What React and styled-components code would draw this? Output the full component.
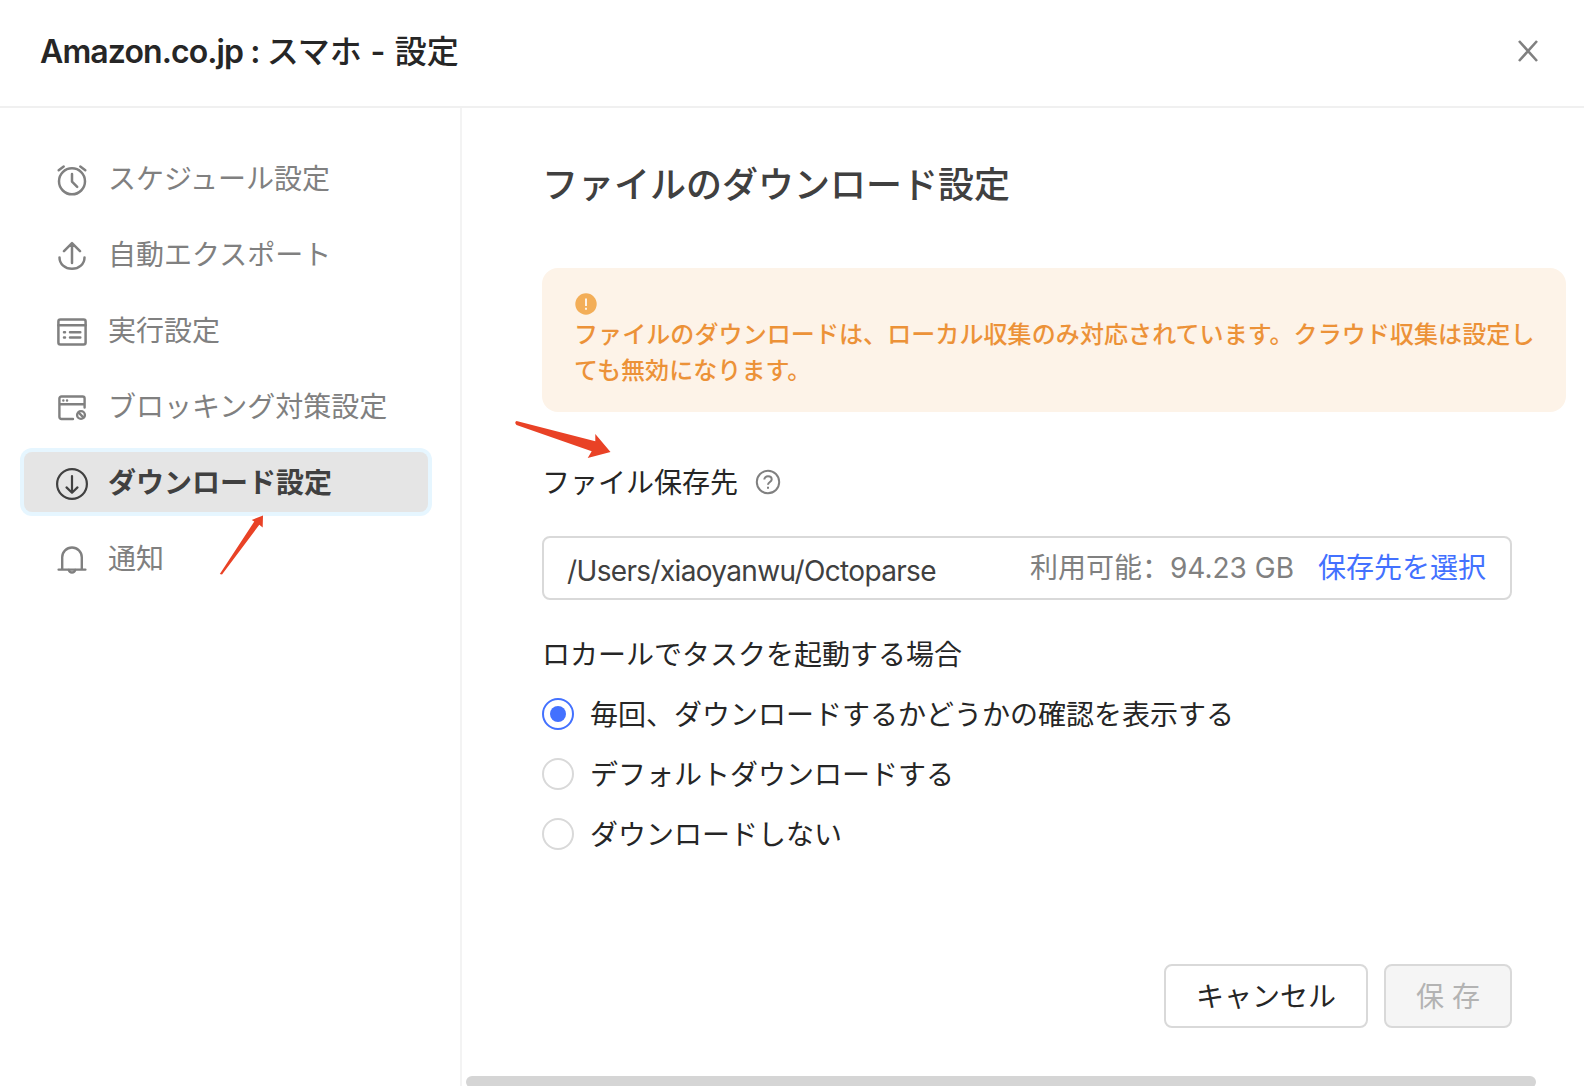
import React, { useState } from 'react';
import styled, { createGlobalStyle } from 'styled-components';

const GlobalStyle = createGlobalStyle`
  * {
    box-sizing: border-box;
  }
  body {
    margin: 0;
    background: #fff;
    font-family: 'Inter', 'Noto Sans CJK JP', sans-serif;
    color: #262626;
  }
  button {
    font-family: inherit;
  }
`;

const Dialog = styled.div`
  position: relative;
  display: flex;
  flex-direction: column;
  width: 1584px;
  height: 1086px;
  overflow: hidden;
  background: #fff;
`;

const Header = styled.header`
  display: flex;
  align-items: center;
  justify-content: space-between;
  flex: none;
  height: 108px;
  padding: 0 44px 4px 40px;
  border-bottom: 2px solid #f0f0f0;
`;

const Title = styled.h1`
  margin: 2px 0 0;
  font-size: 32px;
  line-height: 48px;
  font-weight: 500;
  white-space: pre;
`;

const Latin = styled.span`
  font-weight: ${props => props.$weight || 400};
  letter-spacing: ${props => props.$spacing || '0'};
`;

const CloseButton = styled.button`
  display: flex;
  padding: 0;
  border: 0;
  background: none;
  cursor: pointer;
`;

const Body = styled.div`
  display: flex;
  flex: 1;
  min-height: 0;
`;

const Sidebar = styled.nav`
  display: flex;
  flex-direction: column;
  gap: 16px;
  flex: none;
  width: 462px;
  padding: 40px 32px 0 24px;
  border-right: 2px solid #f3f3f3;
`;

const MenuItem = styled.button`
  display: flex;
  align-items: center;
  gap: 20px;
  width: 404px;
  height: 60px;
  padding: 0 32px;
  border: 0;
  border-radius: 8px;
  font-size: 28px;
  line-height: 40px;
  text-align: left;
  white-space: nowrap;
  cursor: pointer;
  font-weight: ${props => (props.$active ? 700 : 400)};
  color: ${props => (props.$active ? '#404040' : '#808080')};
  background: ${props => (props.$active ? '#e5e5e5' : 'transparent')};
  box-shadow: ${props => (props.$active ? '0 0 0 4px #e6f6ff' : 'none')};

  svg {
    flex: none;
    margin-top: 4px;
  }
`;

const MenuText = styled.span`
  margin-top: 1px;
`;

const Main = styled.main`
  display: flex;
  flex-direction: column;
  flex: 1;
  min-width: 0;
  overflow: hidden;
`;

const Content = styled.div`
  flex: 1;
  width: 1050px;
  padding: 50px 0 0 80px;
`;

const Heading = styled.h2`
  margin: 0 0 56px;
  font-size: 36px;
  line-height: 54px;
  font-weight: 500;
  color: #404040;
`;

const Notice = styled.div`
  width: 1024px;
  height: 144px;
  padding: 24px 24px 24px 32px;
  border-radius: 16px;
  background: #fdf3e8;
  color: #ec9238;
  font-size: 24px;
  line-height: 36px;
  letter-spacing: 0.09px;
  font-weight: 500;

  svg {
    display: block;
  }
  p {
    margin: 0;
    padding-top: 1px;
  }
`;

const FieldLabel = styled.div`
  display: flex;
  align-items: center;
  gap: 17px;
  margin-top: 48px;
  height: 44px;
  font-size: 28px;
  line-height: 44px;
`;

const LabelText = styled.span`
  padding-top: 1px;
`;

const PathField = styled.div`
  display: flex;
  align-items: center;
  width: 970px;
  height: 64px;
  margin-top: 32px;
  padding: 0 24px 0 23px;
  border: 2px solid #d9d9d9;
  border-radius: 8px;
  font-size: 28px;
  line-height: 40px;
  white-space: nowrap;
`;

const Path = styled.span`
  flex: 1;
  padding-top: 5px;
  color: #404040;
`;

const FreeSpace = styled.span`
  margin-right: 24px;
  color: #808080;
  font-family: 'Inter', 'Noto Sans CJK SC', sans-serif;
`;

const PickLink = styled.a`
  color: #4371ff;
  cursor: pointer;
`;

const GroupLabel = styled.div`
  margin-top: 32px;
  padding-top: 1px;
  font-size: 28px;
  line-height: 44px;
`;

const RadioRow = styled.label`
  display: flex;
  align-items: center;
  gap: 16px;
  height: 60px;
  font-size: 28px;
  line-height: 44px;
  cursor: pointer;
`;

const Radio = styled.span`
  display: flex;
  align-items: center;
  justify-content: center;
  width: 32px;
  height: 32px;
  border: 2px solid ${props => (props.$checked ? '#4371ff' : '#d9d9d9')};
  border-radius: 50%;

  &::after {
    content: '';
    width: 16px;
    height: 16px;
    border-radius: 50%;
    background: ${props => (props.$checked ? '#4371ff' : 'transparent')};
  }
`;

const RadioGroup = styled.div`
  padding-top: 7px;
`;

const Footer = styled.footer`
  display: flex;
  justify-content: flex-end;
  gap: 16px;
  width: 1050px;
  padding-bottom: 48px;
`;

const Button = styled.button`
  width: ${props => props.$width};
  height: 64px;
  padding: 1px 0 0;
  border: 2px solid #d9d9d9;
  border-radius: 8px;
  font-size: 28px;
  line-height: 40px;
  color: #262626;
  background: #fff;

  &:disabled {
    color: #b3b3b3;
    background: #f5f5f5;
  }
`;

const ScrollTrack = styled.div`
  flex: none;
  height: 10px;
  padding-left: 4px;
`;

const ScrollThumb = styled.div`
  width: 1070px;
  height: 12px;
  border-radius: 6px;
  background: #d5d5d5;
`;

const Annotations = styled.svg`
  position: absolute;
  top: 0;
  left: 0;
  pointer-events: none;
`;

const Icon = ({ children, width = 2 }) => (
  <svg width="32" height="32" viewBox="0 0 32 32" fill="none" stroke="currentColor"
       strokeWidth={width} strokeLinecap="round" strokeLinejoin="round">
    {children}
  </svg>
);

const ClockIcon = () => (
  <Icon width="2.5">
    <circle cx="16" cy="17.3" r="13" />
    <path d="M16 10v7.6l5.2 5.2M2.7 6.2l5-3.6M29.3 6.2l-5-3.6" />
  </Icon>
);

const ExportIcon = () => (
  <Icon width="2.5">
    <path d="M16 23V3.2M8 11.2l8-8 8 8M3.5 17.5C3.5 24 9 28.8 16 28.8S28.5 24 28.5 17.5" />
  </Icon>
);

const ListIcon = () => (
  <Icon width="2.5">
    <rect x="2.4" y="3.4" width="27.2" height="25.2" rx="2" />
    <path d="M2.4 9.2h27.2M8 16.3h1M14 16.3h10.3M8 21.5h1M14 21.5h10.3" />
  </Icon>
);

const BlockIcon = () => (
  <Icon width="2.4">
    <path d="M17 27H5.4a2 2 0 0 1-2-2V6.5a2 2 0 0 1 2-2h21.2a2 2 0 0 1 2 2v9M3.4 12.2h25.2" />
    <path d="M7.3 8.5h.1M11 8.5h.1" />
    <circle cx="25" cy="23" r="3.9" />
    <path d="M22.7 20.7l4.6 4.6" />
  </Icon>
);

const DownloadIcon = () => (
  <Icon width="2.2">
    <circle cx="16" cy="16" r="14.9" />
    <path d="M16 8v16.5M10.5 19.4l5.5 5.3 5.5-5.3" />
  </Icon>
);

const BellIcon = () => (
  <Icon width="2.4">
    <path d="M6.2 25.5V13.3a9.8 9.8 0 0 1 19.6 0v12.2M2.6 25.6h26.8" />
    <path d="M12.8 26a3.3 3.3 0 0 0 6.4 0" />
  </Icon>
);

const menu = [
  { label: 'スケジュール設定', icon: ClockIcon },
  { label: '自動エクスポート', icon: ExportIcon },
  { label: '実行設定', icon: ListIcon },
  { label: 'ブロッキング対策設定', icon: BlockIcon },
  { label: 'ダウンロード設定', icon: DownloadIcon },
  { label: '通知', icon: BellIcon },
];

const options = [
  '毎回、ダウンロードするかどうかの確認を表示する',
  'デフォルトダウンロードする',
  'ダウンロードしない',
];

const App = () => {
  const [current, setCurrent] = useState(4);
  const [option, setOption] = useState(0);

  return (
    <Dialog>
      <GlobalStyle />
      <Header>
        <Title>
          <Latin $weight={600} $spacing="-0.9px">Amazon.co.jp : </Latin>
          スマホ
          <Latin $weight={600} $spacing="0.6px"> - </Latin>
          設定
        </Title>
        <CloseButton>
          <svg width="24" height="24" viewBox="0 0 24 24" fill="none" stroke="#808080" strokeWidth="2.6">
            <path d="M3 2l18 20M21 2L3 22" />
          </svg>
        </CloseButton>
      </Header>
      <Body>
        <Sidebar>
          {menu.map((item, i) => (
            <MenuItem key={item.label} $active={i === current} onClick={() => setCurrent(i)}>
              <item.icon />
              <MenuText>{item.label}</MenuText>
            </MenuItem>
          ))}
        </Sidebar>
        <Main>
          <Content>
            <Heading>ファイルのダウンロード設定</Heading>
            <Notice>
              <svg width="24" height="24" viewBox="0 0 24 24">
                <circle cx="12" cy="12" r="10.7" fill="#f3ae58" />
                <path d="M12 6.5v7.5M12 15.8v2" stroke="#fdf3e8" strokeWidth="2" />
              </svg>
              <p>ファイルのダウンロードは、ローカル収集のみ対応されています。クラウド収集は設定しても無効になります。</p>
            </Notice>
            <FieldLabel>
              <LabelText>ファイル保存先</LabelText>
              <svg width="26" height="26" viewBox="0 0 26 26" fill="none" stroke="#808080" strokeWidth="2">
                <circle cx="13" cy="13" r="11.2" />
                <path d="M9.3 10.6c0-2 1.6-3.4 3.7-3.4s3.7 1.3 3.7 3.2c0 2.5-3.7 2.7-3.7 5.4M13 17.8v2" />
              </svg>
            </FieldLabel>
            <PathField>
              <Path><Latin $spacing="-0.65px">/Users/xiaoyanwu/Octoparse</Latin></Path>
              <FreeSpace>利用可能：<Latin>94.23 GB</Latin></FreeSpace>
              <PickLink>保存先を選択</PickLink>
            </PathField>
            <GroupLabel>ロカールでタスクを起動する場合</GroupLabel>
            <RadioGroup>
              {options.map((text, i) => (
                <RadioRow key={text} onClick={() => setOption(i)}>
                  <Radio $checked={i === option} />
                  <LabelText>{text}</LabelText>
                </RadioRow>
              ))}
            </RadioGroup>
          </Content>
          <Footer>
            <Button $width="204px">キャンセル</Button>
            <Button $width="128px" disabled>保 存</Button>
          </Footer>
          <ScrollTrack>
            <ScrollThumb />
          </ScrollTrack>
        </Main>
      </Body>
      <Annotations width="1584" height="1086">
        <path fill="#e94226" d="M516.5 421L595.3 441.3V434L610.5 452L587.7 458L591.7 451.3L516.5 425Q514 422.5 516.5 421Z" />
        <path fill="#e94226" d="M263 515.5L262.7 527.5L259.3 524.8L222 574.5L219.8 574L254.3 521.5L251.7 520Z" />
      </Annotations>
    </Dialog>
  );
};

export default App;
